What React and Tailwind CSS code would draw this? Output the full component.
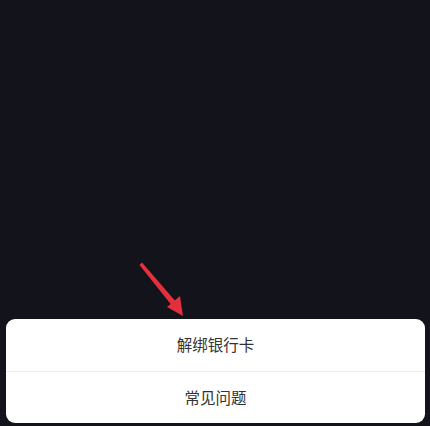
export default function App() {
  return (
    <div
      className="relative flex h-[426px] w-[430px] flex-col overflow-hidden bg-[#13131b]"
      style={{ fontFamily: '"Noto Sans CJK SC", "Noto Sans", sans-serif' }}
    >
      <div className="flex-1" />
      <svg
        className="absolute left-[136px] top-[259px]"
        width="52"
        height="62"
        viewBox="0 0 52 62"
      >
        <polygon points="3.5,6 6,3.5 41,44 37,48" fill="#e3303c" />
        <polygon points="47,57 31,48 44,37" fill="#e3303c" />
      </svg>
      <div className="mb-[3px] ml-[6px] mr-[5px] flex flex-col overflow-hidden rounded-[9px] bg-white">
        <div className="flex h-[53px] items-center justify-center border-b border-[#ececec] text-[15.5px] text-[#333333]">
          解绑银行卡
        </div>
        <div className="flex h-[51px] items-center justify-center text-[15.5px] text-[#333333]">
          常见问题
        </div>
      </div>
    </div>
  );
}
